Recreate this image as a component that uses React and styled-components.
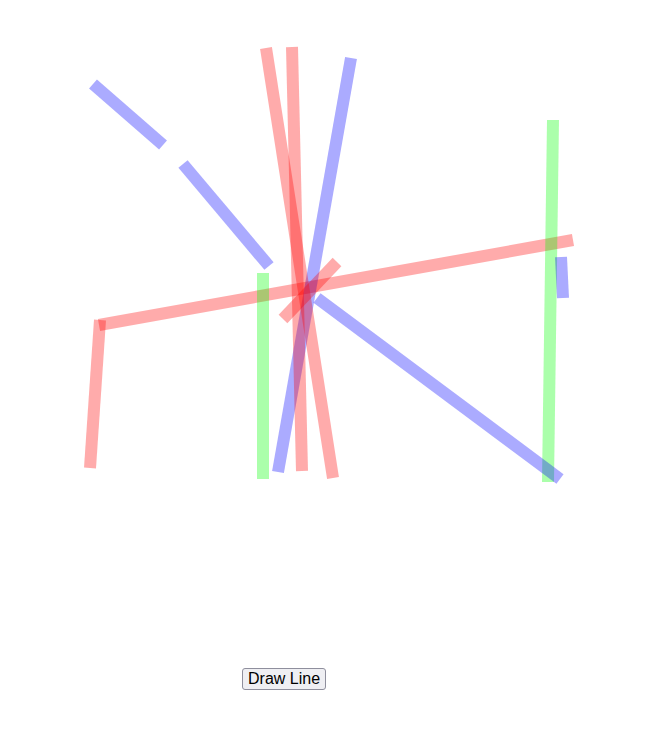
import React from "react"
import styled, { createGlobalStyle } from "styled-components"

const GlobalStyle = createGlobalStyle`
  html, body {
    margin: 0;
    padding: 0;
    background: #ffffff;
  }
`

const lines = [
  { c: "blue", x1: 93, y1: 84, x2: 163, y2: 145 },
  { c: "blue", x1: 183, y1: 164, x2: 269, y2: 266 },
  { c: "red", x1: 99, y1: 325, x2: 573, y2: 240 },
  { c: "red", x1: 100, y1: 320, x2: 90, y2: 468 },
  { c: "green", x1: 263, y1: 273, x2: 263, y2: 479 },
  { c: "green", x1: 553, y1: 120, x2: 548, y2: 482 },
  { c: "blue", x1: 561, y1: 257, x2: 563, y2: 298 },
  { c: "blue", x1: 317, y1: 298, x2: 560, y2: 479 },
  { c: "blue", x1: 351, y1: 58, x2: 278, y2: 472 },
  { c: "red", x1: 266, y1: 48, x2: 333, y2: 478 },
  { c: "red", x1: 292, y1: 47, x2: 302, y2: 471 },
  { c: "red", x1: 283, y1: 319, x2: 337, y2: 262 },
]

const colors = {
  red: "rgba(255, 0, 0, 0.33)",
  blue: "rgba(0, 0, 255, 0.33)",
  green: "rgba(0, 255, 0, 0.33)",
}

const App = () => {
  return (
    <Page>
      <GlobalStyle />
      <Board width="664" height="668" viewBox="0 0 664 668">
        {lines.map((l, i) => (
          <line
            key={i}
            x1={l.x1}
            y1={l.y1}
            x2={l.x2}
            y2={l.y2}
            stroke={colors[l.c]}
            strokeWidth="12"
            strokeLinecap="butt"
          />
        ))}
      </Board>
      <Controls>
        <DrawButton type="button">Draw Line</DrawButton>
      </Controls>
    </Page>
  )
}

const Page = styled.div`
  display: flex;
  flex-direction: column;
  width: 664px;
  height: 742px;
  background: #ffffff;
`

const Board = styled.svg`
  display: block;
  flex: none;
`

const Controls = styled.div`
  display: flex;
  padding-left: 242px;
`

const DrawButton = styled.button`
  font-family: "Liberation Sans", Arial, sans-serif;
  font-size: 16px;
  line-height: 18px;
  white-space: nowrap;
  color: #000000;
  background: #efeff3;
  border: 1px solid #8f8f9d;
  border-radius: 3px;
  padding: 1px 5px;
  height: 22px;
  cursor: pointer;
`

export default App
